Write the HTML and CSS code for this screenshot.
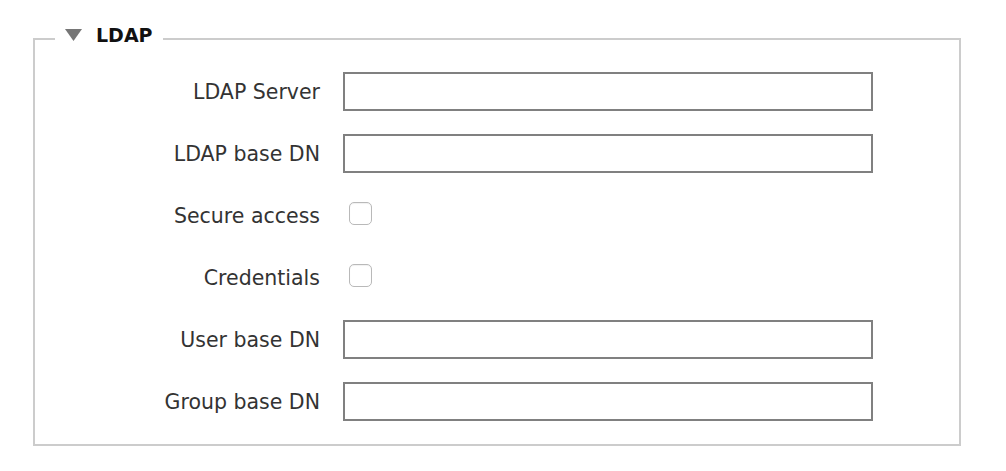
FILE: index.html
```html
<!DOCTYPE html>
<html>
<head>
<meta charset="utf-8">
<link rel="stylesheet" href="styles.css">
</head>
<body>
<div class="page">
  <fieldset class="group">
    <legend class="group-title">
      <svg class="caret" width="17" height="12" viewBox="0 0 17 12"><polygon points="0,0 17,0 8.5,12" fill="#767676"/></svg>
      <span>LDAP</span>
    </legend>
    <div class="form">
      <label class="lbl" for="srv">LDAP Server</label>
      <input class="txt" id="srv" type="text">
      <label class="lbl" for="bdn">LDAP base DN</label>
      <input class="txt" id="bdn" type="text">
      <label class="lbl" for="sec">Secure access</label>
      <div class="cbcell"><input class="cb" id="sec" type="checkbox"></div>
      <label class="lbl" for="cred">Credentials</label>
      <div class="cbcell"><input class="cb" id="cred" type="checkbox"></div>
      <label class="lbl" for="udn">User base DN</label>
      <input class="txt" id="udn" type="text">
      <label class="lbl" for="gdn">Group base DN</label>
      <input class="txt" id="gdn" type="text">
    </div>
  </fieldset>
</div>
</body>
</html>
```
FILE: styles.css
```css
html, body {
  margin: 0;
  padding: 0;
  background: #fff;
}
body {
  font-family: "DejaVu Sans", Verdana, sans-serif;
  color: #333;
}
.page {
  padding: 23px 0 0 33px;
}
.group {
  width: 924px;
  margin: 0;
  padding: 0 0 23px 0;
  border: 2px solid #cccccc;
  box-sizing: content-box;
}
.group-title {
  margin-left: 20px;
  padding: 0 10px 8px 10px;
  height: 24px;
  line-height: 24px;
  display: flex;
  align-items: center;
  gap: 14px;
  font-weight: bold;
  font-size: 19px;
  color: #111;
}
.caret {
  display: block;
  margin-top: -1px;
}
.form {
  padding-top: 17px;
  display: grid;
  grid-template-columns: 285px 530px;
  column-gap: 23px;
  row-gap: 23px;
  align-items: center;
}
.lbl {
  text-align: right;
  font-size: 20.5px;
  color: #333;
}
.txt {
  box-sizing: border-box;
  width: 530px;
  height: 39px;
  margin: 0;
  border: 2px solid #808080;
  background: #fff;
  font: inherit;
  padding: 0 8px;
  outline: none;
}
.cbcell {
  height: 39px;
  display: flex;
  align-items: center;
}
.cb {
  appearance: none;
  -webkit-appearance: none;
  margin: -4px 0 0 6px;
  width: 23px;
  height: 23px;
  border: 1px solid #b9b9b9;
  border-radius: 5px;
  background: #fff;
  box-shadow: inset 0 1px 1px rgba(0,0,0,0.06);
}
```
